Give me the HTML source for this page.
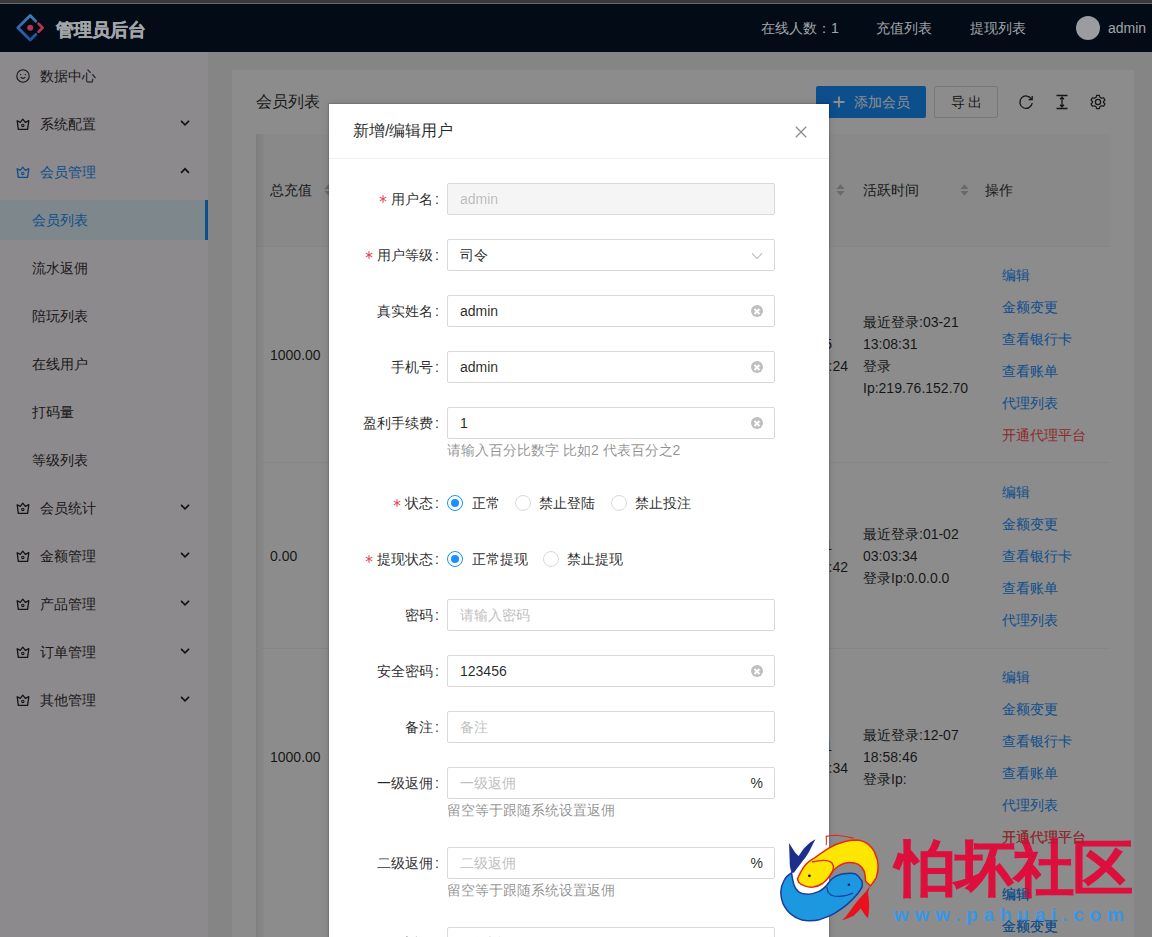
<!DOCTYPE html><html><head><meta charset="utf-8"><style>
*{box-sizing:border-box;margin:0;padding:0}
html,body{width:1152px;height:937px;overflow:hidden}
body{font-family:"Liberation Sans",sans-serif;font-size:14px;color:rgba(0,0,0,.85);background:#f2f2f2;position:relative}
.abs{position:absolute}
#topbar{left:0;top:0;width:1152px;height:4px;background:#3a3a3a;z-index:30}
#topline{left:0;top:3px;width:1152px;height:1px;background:#68686c;z-index:31}
#header{left:0;top:4px;width:1152px;height:48px;background:#020b16;z-index:30;color:#a2a5a8}
#side{left:0;top:52px;width:208px;height:885px;background:#fffbff}
.mi{position:absolute;left:0;width:208px;height:40px;line-height:40px;white-space:nowrap}
.mi .t{position:absolute;left:40px;top:0}
.mi.sub .t{left:32px}
.mi svg.ic{position:absolute;left:16px;top:13px}
.mi svg.ch{position:absolute;left:180px;top:14px}
#card{left:232px;top:70px;width:902px;height:900px;background:#fff}
#mask{left:0;top:0;width:1152px;height:937px;background:rgba(0,0,0,.45);z-index:10}
#modal{left:329px;top:104px;width:500px;height:900px;background:#fff;z-index:20;box-shadow:0 0 1px 1px rgba(0,0,0,.12),0 0 8px rgba(0,0,0,.12)}
.lab{position:absolute;right:390px;white-space:nowrap;text-align:right;line-height:32px;height:32px}
.req{margin-right:4px;vertical-align:middle;position:relative;top:-1px}
.inp{position:absolute;left:118px;width:328px;height:32px;border:1px solid #d9d9d9;border-radius:2px;line-height:30px;padding-left:12px;color:rgba(0,0,0,.85);white-space:nowrap}
.ph{color:#bfbfbf}
.help{position:absolute;left:118px;color:rgba(0,0,0,.45);white-space:nowrap;line-height:22px}
.clr{position:absolute;right:11px;top:9px;width:12px;height:12px;border-radius:50%;background:#bfbfbf}
.clr:before,.clr:after{content:"";position:absolute;left:5px;top:2.5px;width:2px;height:7px;background:#fff;transform:rotate(45deg)}
.clr:after{transform:rotate(-45deg)}
.radio{position:absolute;width:16px;height:16px;border:1px solid #d9d9d9;border-radius:50%;background:#fff}
.radio.on{border-color:#1890ff}
.radio.on:after{content:"";position:absolute;left:3px;top:3px;width:8px;height:8px;border-radius:50%;background:#1890ff}
.rt{position:absolute;white-space:nowrap;line-height:22px}
.link{color:#1890ff;position:absolute;left:770px;white-space:nowrap;line-height:22px}
.txt{position:absolute;white-space:nowrap;line-height:22px}
</style></head><body>
<div id="topbar" class="abs"></div><div id="topline" class="abs"></div>
<div id="header" class="abs">
<svg class="abs" style="left:0;top:-4px" width="60" height="56" viewBox="0 0 60 56">
<defs><linearGradient id="lg" x1="0" y1="0" x2="0" y2="1"><stop offset="0" stop-color="#3a80b3"/><stop offset="1" stop-color="#2352a6"/></linearGradient></defs><path d="M35.8 21.2 L30.2 15.6 L17.8 27.8 L30.2 40 L35.8 34.4" fill="none" stroke="url(#lg)" stroke-width="2.8" stroke-linecap="round" stroke-linejoin="round"/>
<circle cx="30.2" cy="27.8" r="3" fill="#b03652"/>
<path d="M38.6 23.8 L42.6 27.8 L38.6 31.8" fill="none" stroke="#b03652" stroke-width="2.8" stroke-linecap="round" stroke-linejoin="round"/>
</svg>
<div class="abs" style="left:56px;top:2px;line-height:48px;font-size:18px;font-weight:bold;color:#a2a5a8;-webkit-text-stroke:0.4px #a2a5a8">管理员后台</div>
<div class="abs" style="left:761px;top:0;line-height:48px">在线人数：1</div>
<div class="abs" style="left:876px;top:0;line-height:48px">充值列表</div>
<div class="abs" style="left:970px;top:0;line-height:48px">提现列表</div>
<div class="abs" style="left:1076px;top:12px;width:24px;height:24px;border-radius:50%;background:#9a9ca0"></div>
<div class="abs" style="left:1108px;top:0;line-height:48px">admin</div>
</div>
<div id="side" class="abs">
<div class="mi" style="top:4px;"><svg class="ic" width="14" height="14" viewBox="0 0 14 14"><circle cx="7" cy="7" r="6.2" fill="none" stroke="currentColor" stroke-width="1.1"/><circle cx="4.6" cy="5.6" r=".7" fill="currentColor"/><circle cx="9.4" cy="5.6" r=".7" fill="currentColor"/><path d="M4.6 8.2 Q7 10.6 9.4 8.2" fill="none" stroke="currentColor" stroke-width="1.1"/></svg><span class="t">数据中心</span></div>
<div class="mi" style="top:52px;"><svg class="ic" width="14" height="14" viewBox="0 0 14 14"><path d="M1.2 3.7 L4.3 5.4 L6.8 2.2 L9.3 5.4 L12.8 3.7 L11.6 12.4 L2.3 12.4 Z" fill="none" stroke="currentColor" stroke-width="1.3" stroke-linejoin="round"/><circle cx="6.8" cy="8.4" r="1.2" fill="none" stroke="currentColor" stroke-width="1.1"/></svg><span class="t">系统配置</span><svg class="ch" width="10" height="10" viewBox="0 0 10 10"><path d="M1 2.8 L5 6.8 L9 2.8" fill="none" stroke="currentColor" stroke-width="1.7"/></svg></div>
<div class="mi" style="top:100px;color:#1890ff;"><svg class="ic" width="14" height="14" viewBox="0 0 14 14"><path d="M1.2 3.7 L4.3 5.4 L6.8 2.2 L9.3 5.4 L12.8 3.7 L11.6 12.4 L2.3 12.4 Z" fill="none" stroke="currentColor" stroke-width="1.3" stroke-linejoin="round"/><circle cx="6.8" cy="8.4" r="1.2" fill="none" stroke="currentColor" stroke-width="1.1"/></svg><span class="t">会员管理</span><svg class="ch" width="10" height="10" viewBox="0 0 10 10"><path d="M1 6.8 L5 2.8 L9 6.8" fill="none" stroke="rgba(0,0,0,.85)" stroke-width="1.7"/></svg></div>
<div class="mi sub" style="top:148px;color:#1890ff;background:#e6f7ff;"><span class="t">会员列表</span></div>
<div class="abs" style="left:205px;top:148px;width:3px;height:40px;background:#1890ff"></div>
<div class="mi sub" style="top:196px;"><span class="t">流水返佣</span></div>
<div class="mi sub" style="top:244px;"><span class="t">陪玩列表</span></div>
<div class="mi sub" style="top:292px;"><span class="t">在线用户</span></div>
<div class="mi sub" style="top:340px;"><span class="t">打码量</span></div>
<div class="mi sub" style="top:388px;"><span class="t">等级列表</span></div>
<div class="mi" style="top:436px;"><svg class="ic" width="14" height="14" viewBox="0 0 14 14"><path d="M1.2 3.7 L4.3 5.4 L6.8 2.2 L9.3 5.4 L12.8 3.7 L11.6 12.4 L2.3 12.4 Z" fill="none" stroke="currentColor" stroke-width="1.3" stroke-linejoin="round"/><circle cx="6.8" cy="8.4" r="1.2" fill="none" stroke="currentColor" stroke-width="1.1"/></svg><span class="t">会员统计</span><svg class="ch" width="10" height="10" viewBox="0 0 10 10"><path d="M1 2.8 L5 6.8 L9 2.8" fill="none" stroke="currentColor" stroke-width="1.7"/></svg></div>
<div class="mi" style="top:484px;"><svg class="ic" width="14" height="14" viewBox="0 0 14 14"><path d="M1.2 3.7 L4.3 5.4 L6.8 2.2 L9.3 5.4 L12.8 3.7 L11.6 12.4 L2.3 12.4 Z" fill="none" stroke="currentColor" stroke-width="1.3" stroke-linejoin="round"/><circle cx="6.8" cy="8.4" r="1.2" fill="none" stroke="currentColor" stroke-width="1.1"/></svg><span class="t">金额管理</span><svg class="ch" width="10" height="10" viewBox="0 0 10 10"><path d="M1 2.8 L5 6.8 L9 2.8" fill="none" stroke="currentColor" stroke-width="1.7"/></svg></div>
<div class="mi" style="top:532px;"><svg class="ic" width="14" height="14" viewBox="0 0 14 14"><path d="M1.2 3.7 L4.3 5.4 L6.8 2.2 L9.3 5.4 L12.8 3.7 L11.6 12.4 L2.3 12.4 Z" fill="none" stroke="currentColor" stroke-width="1.3" stroke-linejoin="round"/><circle cx="6.8" cy="8.4" r="1.2" fill="none" stroke="currentColor" stroke-width="1.1"/></svg><span class="t">产品管理</span><svg class="ch" width="10" height="10" viewBox="0 0 10 10"><path d="M1 2.8 L5 6.8 L9 2.8" fill="none" stroke="currentColor" stroke-width="1.7"/></svg></div>
<div class="mi" style="top:580px;"><svg class="ic" width="14" height="14" viewBox="0 0 14 14"><path d="M1.2 3.7 L4.3 5.4 L6.8 2.2 L9.3 5.4 L12.8 3.7 L11.6 12.4 L2.3 12.4 Z" fill="none" stroke="currentColor" stroke-width="1.3" stroke-linejoin="round"/><circle cx="6.8" cy="8.4" r="1.2" fill="none" stroke="currentColor" stroke-width="1.1"/></svg><span class="t">订单管理</span><svg class="ch" width="10" height="10" viewBox="0 0 10 10"><path d="M1 2.8 L5 6.8 L9 2.8" fill="none" stroke="currentColor" stroke-width="1.7"/></svg></div>
<div class="mi" style="top:628px;"><svg class="ic" width="14" height="14" viewBox="0 0 14 14"><path d="M1.2 3.7 L4.3 5.4 L6.8 2.2 L9.3 5.4 L12.8 3.7 L11.6 12.4 L2.3 12.4 Z" fill="none" stroke="currentColor" stroke-width="1.3" stroke-linejoin="round"/><circle cx="6.8" cy="8.4" r="1.2" fill="none" stroke="currentColor" stroke-width="1.1"/></svg><span class="t">其他管理</span><svg class="ch" width="10" height="10" viewBox="0 0 10 10"><path d="M1 2.8 L5 6.8 L9 2.8" fill="none" stroke="currentColor" stroke-width="1.7"/></svg></div>
</div>
<div id="card" class="abs">
<div class="txt" style="left:24px;top:21px;font-size:16px;line-height:22px">会员列表</div>
<div class="abs" style="left:584px;top:16px;width:110px;height:32px;background:#1890ff;border-radius:2px;color:#fff;line-height:32px;white-space:nowrap"><svg class="abs" style="left:17px;top:10px" width="12" height="12" viewBox="0 0 12 12"><path d="M6 0.5 V11.5 M0.5 6 H11.5" stroke="#fff" stroke-width="1.8"/></svg><span class="abs" style="left:38px;top:0">添加会员</span></div>
<div class="abs" style="left:702px;top:16px;width:64px;height:32px;border:1px solid #d9d9d9;border-radius:2px;line-height:30px;text-align:center;letter-spacing:3px;padding-left:3px">导出</div>
<svg class="abs" style="left:786px;top:24px" width="16" height="16" viewBox="0 0 16 16"><path d="M13.5 5.2 A6.2 6.2 0 1 0 14.2 9" fill="none" stroke="rgba(0,0,0,.85)" stroke-width="1.3"/><path d="M10.6 5.6 L14.2 5.6 L14.2 2" fill="none" stroke="rgba(0,0,0,.85)" stroke-width="1.3"/></svg>
<svg class="abs" style="left:822px;top:24px" width="16" height="16" viewBox="0 0 16 16"><path d="M2.5 1.5 H13.5 M2.5 14.5 H13.5 M8 3.5 V12.5 M6 5.2 L8 3.2 L10 5.2 M6 10.8 L8 12.8 L10 10.8" fill="none" stroke="rgba(0,0,0,.85)" stroke-width="1.3"/></svg>
<svg class="abs" style="left:858px;top:24px" width="16" height="16" viewBox="0 0 16 16"><path d="M6.6 1.3 H9.4 L9.9 3.3 L11.6 4.3 L13.6 3.7 L15 6.1 L13.5 7.5 V8.5 L15 9.9 L13.6 12.3 L11.6 11.7 L9.9 12.7 L9.4 14.7 H6.6 L6.1 12.7 L4.4 11.7 L2.4 12.3 L1 9.9 L2.5 8.5 V7.5 L1 6.1 L2.4 3.7 L4.4 4.3 L6.1 3.3 Z" fill="none" stroke="rgba(0,0,0,.85)" stroke-width="1.2" stroke-linejoin="round"/><circle cx="8" cy="8" r="2.6" fill="none" stroke="rgba(0,0,0,.85)" stroke-width="1.2"/></svg>
<div class="abs" style="left:24px;top:64px;width:854px;height:113px;background:#fafafa;border-bottom:1px solid #f4f4f4"></div>
<div class="abs" style="left:24px;top:64px;width:8px;height:900px;background:linear-gradient(to right,rgba(0,0,0,.1),rgba(0,0,0,.06) 30%,rgba(0,0,0,.04) 90%,transparent)"></div>
<div class="txt" style="left:38px;top:109px">总充值</div>
<svg class="abs" style="left:92px;top:114px" width="9" height="12" viewBox="0 0 9 12"><path d="M4.5 0.3 L8.6 5 H0.4Z M4.5 11.7 L8.6 7 H0.4Z" fill="#bfbfbf"/></svg>
<svg class="abs" style="left:728px;top:114px" width="9" height="12" viewBox="0 0 9 12"><path d="M4.5 0.3 L8.6 5 H0.4Z M4.5 11.7 L8.6 7 H0.4Z" fill="#bfbfbf"/></svg>
<svg class="abs" style="left:604px;top:114px" width="9" height="12" viewBox="0 0 9 12"><path d="M4.5 0.3 L8.6 5 H0.4Z M4.5 11.7 L8.6 7 H0.4Z" fill="#bfbfbf"/></svg>
<div class="txt" style="left:631px;top:109px">活跃时间</div>
<div class="txt" style="left:753px;top:109px">操作</div>
<div class="abs" style="left:24px;top:392px;width:854px;height:1px;background:#f3f3f3"></div>
<div class="txt" style="left:38px;top:274px">1000.00</div>
<div class="txt" style="left:631px;top:241px">最近登录:03-21</div>
<div class="txt" style="left:631px;top:263px">13:08:31</div>
<div class="txt" style="left:631px;top:285px">登录</div>
<div class="txt" style="left:631px;top:307px">Ip:219.76.152.70</div>
<div class="link" style="top:194px;color:#1890ff">编辑</div>
<div class="link" style="top:226px;color:#1890ff">金额变更</div>
<div class="link" style="top:258px;color:#1890ff">查看银行卡</div>
<div class="link" style="top:290px;color:#1890ff">查看账单</div>
<div class="link" style="top:322px;color:#1890ff">代理列表</div>
<div class="link" style="top:354px;color:#ff4d4f">开通代理平台</div>
<div class="abs" style="left:24px;top:578px;width:854px;height:1px;background:#f3f3f3"></div>
<div class="txt" style="left:38px;top:475px">0.00</div>
<div class="txt" style="left:631px;top:453px">最近登录:01-02</div>
<div class="txt" style="left:631px;top:475px">03:03:34</div>
<div class="txt" style="left:631px;top:497px">登录Ip:0.0.0.0</div>
<div class="link" style="top:411px;color:#1890ff">编辑</div>
<div class="link" style="top:443px;color:#1890ff">金额变更</div>
<div class="link" style="top:475px;color:#1890ff">查看银行卡</div>
<div class="link" style="top:507px;color:#1890ff">查看账单</div>
<div class="link" style="top:539px;color:#1890ff">代理列表</div>
<div class="txt" style="left:38px;top:676px">1000.00</div>
<div class="txt" style="left:631px;top:654px">最近登录:12-07</div>
<div class="txt" style="left:631px;top:676px">18:58:46</div>
<div class="txt" style="left:631px;top:698px">登录Ip:</div>
<div class="link" style="top:596px;color:#1890ff">编辑</div>
<div class="link" style="top:628px;color:#1890ff">金额变更</div>
<div class="link" style="top:660px;color:#1890ff">查看银行卡</div>
<div class="link" style="top:692px;color:#1890ff">查看账单</div>
<div class="link" style="top:724px;color:#1890ff">代理列表</div>
<div class="link" style="top:756px;color:#ff4d4f">开通代理平台</div>
<div class="txt" style="right:302px;top:263px">2023-03-15</div>
<div class="txt" style="right:286px;top:285px">10:23:24</div>
<div class="txt" style="right:302px;top:464px">2023-01-01</div>
<div class="txt" style="right:286px;top:486px">10:23:42</div>
<div class="txt" style="right:302px;top:665px">2022-12-01</div>
<div class="txt" style="right:286px;top:687px">10:23:34</div>
<div class="link" style="top:813px">编辑</div><div class="link" style="top:845px">金额变更</div>
</div>
<div id="mask" class="abs"></div>
<div id="modal" class="abs">
<div class="txt" style="left:24px;top:16px;font-size:16px;line-height:22px">新增/编辑用户</div>
<svg class="abs" style="left:466px;top:22px" width="12" height="12" viewBox="0 0 12 12"><path d="M0.8 0.8 L11.2 11.2 M11.2 0.8 L0.8 11.2" stroke="rgba(0,0,0,.45)" stroke-width="1.3"/></svg>
<div class="abs" style="left:0;top:54px;width:500px;height:1px;background:#f0f0f0"></div>
<div class="lab" style="top:79px"><svg class="req" width="8" height="8" viewBox="0 0 8 8"><path d="M4 0.3 V7.7 M0.8 2.1 L7.2 5.9 M7.2 2.1 L0.8 5.9" stroke="#e04b55" stroke-width="1.1"/></svg>用户名<span style="margin:0 0 0 2px">:</span></div>
<div class="inp" style="top:79px;background:#f5f5f5;color:rgba(0,0,0,.25);">admin</div>
<div class="lab" style="top:135px"><svg class="req" width="8" height="8" viewBox="0 0 8 8"><path d="M4 0.3 V7.7 M0.8 2.1 L7.2 5.9 M7.2 2.1 L0.8 5.9" stroke="#e04b55" stroke-width="1.1"/></svg>用户等级<span style="margin:0 0 0 2px">:</span></div>
<div class="inp" style="top:135px;">司令<svg class="abs" style="right:11px;top:10px" width="12" height="12" viewBox="0 0 12 12"><path d="M1 3.5 L6 8.5 L11 3.5" fill="none" stroke="#bfbfbf" stroke-width="1.1"/></svg></div>
<div class="lab" style="top:191px">真实姓名<span style="margin:0 0 0 2px">:</span></div>
<div class="inp" style="top:191px;">admin<span class="clr"></span></div>
<div class="lab" style="top:247px">手机号<span style="margin:0 0 0 2px">:</span></div>
<div class="inp" style="top:247px;">admin<span class="clr"></span></div>
<div class="lab" style="top:303px">盈利手续费<span style="margin:0 0 0 2px">:</span></div>
<div class="inp" style="top:303px;">1<span class="clr"></span></div>
<div class="help" style="top:335px">请输入百分比数字 比如2 代表百分之2</div>
<div class="lab" style="top:383px"><svg class="req" width="8" height="8" viewBox="0 0 8 8"><path d="M4 0.3 V7.7 M0.8 2.1 L7.2 5.9 M7.2 2.1 L0.8 5.9" stroke="#e04b55" stroke-width="1.1"/></svg>状态<span style="margin:0 0 0 2px">:</span></div>
<div class="radio on" style="left:118px;top:391px"></div><div class="rt" style="left:143px;top:388px">正常</div>
<div class="radio" style="left:186px;top:391px"></div><div class="rt" style="left:210px;top:388px">禁止登陆</div>
<div class="radio" style="left:282px;top:391px"></div><div class="rt" style="left:306px;top:388px">禁止投注</div>
<div class="lab" style="top:439px"><svg class="req" width="8" height="8" viewBox="0 0 8 8"><path d="M4 0.3 V7.7 M0.8 2.1 L7.2 5.9 M7.2 2.1 L0.8 5.9" stroke="#e04b55" stroke-width="1.1"/></svg>提现状态<span style="margin:0 0 0 2px">:</span></div>
<div class="radio on" style="left:118px;top:447px"></div><div class="rt" style="left:143px;top:444px">正常提现</div>
<div class="radio" style="left:214px;top:447px"></div><div class="rt" style="left:238px;top:444px">禁止提现</div>
<div class="lab" style="top:495px">密码<span style="margin:0 0 0 2px">:</span></div>
<div class="inp" style="top:495px;"><span class="ph">请输入密码</span></div>
<div class="lab" style="top:551px">安全密码<span style="margin:0 0 0 2px">:</span></div>
<div class="inp" style="top:551px;">123456<span class="clr"></span></div>
<div class="lab" style="top:607px">备注<span style="margin:0 0 0 2px">:</span></div>
<div class="inp" style="top:607px;"><span class="ph">备注</span></div>
<div class="lab" style="top:663px">一级返佣<span style="margin:0 0 0 2px">:</span></div>
<div class="inp" style="top:663px;"><span class="ph">一级返佣</span><span class="abs" style="right:11px;top:0">%</span></div>
<div class="help" style="top:695px">留空等于跟随系统设置返佣</div>
<div class="lab" style="top:743px">二级返佣<span style="margin:0 0 0 2px">:</span></div>
<div class="inp" style="top:743px;"><span class="ph">二级返佣</span><span class="abs" style="right:11px;top:0">%</span></div>
<div class="help" style="top:775px">留空等于跟随系统设置返佣</div>
<div class="lab" style="top:823px">三级返佣<span style="margin:0 0 0 2px">:</span></div>
<div class="inp" style="top:823px;"><span class="ph">三级返佣</span><span class="abs" style="right:11px;top:0">%</span></div>
</div>
<svg class="abs" style="left:779px;top:834px;z-index:40" width="102" height="94" viewBox="0 0 102 94">
<path d="M83 47.2 C80 42 77 39.5 74.6 39.4 C70 39 66 39.5 62.7 40 C58 41 55 43 53.1 44.8 C50 47.5 49 50 47.2 51.9 C44 55 42 57 38.8 57.9 C35 59.5 32 60.5 29.2 60.3 C25 60.2 22 59.5 19.7 57.9 C17 55.5 15.5 53 14.9 50.7 C13.5 46 13 42 12.5 38.8 C9 41 6.5 43.5 5.3 46 C3 50 1.8 54 1.8 57.9 C1.8 62 2.5 66 4.1 69.9 C6.5 74.5 9 78 12.5 80.6 C17 84 22 86 26.8 86.6 C32 87 37 86.5 41.2 85.4 C46 84 51 82 55.5 79.4 C60 76.5 64.5 73.5 68.7 69.9 C72 67 75.5 63.5 78.2 60.3 C80.5 57.5 82 55 83 53.1 C83.5 51 83.5 49 83 47.2 Z" fill="#1b98e0" stroke="#1d3a9c" stroke-width="1.5"/>
<path d="M48 53 C48 58 50 61 55 62 C62 63 68 62 74 59" fill="none" stroke="#1d3a9c" stroke-width="1.2"/>
<path d="M12.5 38.8 C11 34 10.5 30 10.7 26.8 C10.5 20 10.2 14 10.1 8.9 C12 12 14 15.5 16.1 18.5 C17.5 20 18.5 21 19.7 22 C22 18.5 24 15 26.8 12.5 C30 9.5 33 7 36.4 5.3 C34.5 9 32.5 13 30.4 17.3 C28 21.5 25 25.5 22 29.2 C19.5 32.5 17 35.5 14.9 38.8 Z" fill="#1c2f8c"/>
<path d="M18.5 44.8 C21 39 23.5 34 26.8 30.4 C29.5 27.5 33 25 36.4 23.3 C41 20 46 16.5 50.7 13.7 C55 11 60 9 65 7.7 C69 6.5 73 5.9 77 5.9 C81 6 85.5 7.5 89 10.1 C92.5 13 95 16 96.1 19.7 C98 23.5 99 27.5 99.1 31.6 C99.3 36 98.5 40 97.3 43.6 C95.5 47 93.5 49.5 91.4 51.9 L86.6 47.2 C86.5 44 86 40.5 85.4 37.6 C84 34.5 82 32 79.4 30.4 C76.5 29 73 28.5 69.9 28.6 C66.5 29 63 30 60.3 31.6 C58 33 56 34.5 54.3 36.4 C52.5 38.5 51 41 49.5 43.6 C47.5 46 45.5 48 43.6 49.5 C40.5 51.5 37 52.7 34 53.1 C31 53.3 28 52.8 25.6 51.9 C23 51 21 49.8 19.7 48.3 Z" fill="#ffe600" stroke="#e4261c" stroke-width="1.5"/>
<path d="M33 28 C41 26 49 25 53 29 C56 33 54 38 50 43" fill="none" stroke="#e4261c" stroke-width="1.3"/>
<path d="M91.4 51.9 C89.5 54 88 56 86.6 57.9 C83.5 61.5 80 65 77 68.7 C74 73 70.5 77.5 67.5 81.8 C66 83.5 64.5 85 62.7 86.6 C67 85 71 83.5 74.6 81.8 C77 79.5 79.5 77 81.8 74.6 C83.5 77 85 79.5 86.6 81.8 C87.5 82.8 88.2 83.5 89 84.2 C89.7 80 90.2 76 90.2 72.2 C90 67.5 89.7 62.5 89 57.9 Z" fill="#ea101c"/>
<path d="M47.2 11.3 C47.5 8 47.5 5 47.2 2.4 C51 1.5 54.5 1.2 57.9 1.2 C63 1.8 69 2.8 74.6 4.1" fill="none" stroke="#e4261c" stroke-width="1.1"/>
<circle cx="30.4" cy="41.8" r="1.4" fill="#111"/>
<circle cx="69.9" cy="50.7" r="1.3" fill="#1d2a6c"/>
</svg>
<div class="abs" style="left:896px;top:834px;z-index:40;font-size:60px;line-height:70px;font-weight:900;color:#dd0f3d;-webkit-text-stroke:1px #dd0f3d;white-space:nowrap;letter-spacing:-1px">怕坏社区</div>
<div class="abs" style="left:894px;top:900px;z-index:40;font-size:19px;line-height:30px;font-weight:bold;color:#3896e6;white-space:nowrap;letter-spacing:5.8px">www.pahuai.com</div>
<div class="abs" style="left:1002px;top:826px;z-index:41;color:rgba(140,42,43,.85);white-space:nowrap;line-height:22px">开通代理平台</div>
<div class="abs" style="left:1002px;top:883px;z-index:41;color:rgba(13,79,140,.85);white-space:nowrap;line-height:22px">编辑</div>
<div class="abs" style="left:1002px;top:915px;z-index:41;color:rgba(13,79,140,.85);white-space:nowrap;line-height:22px">金额变更</div>
</body></html>
